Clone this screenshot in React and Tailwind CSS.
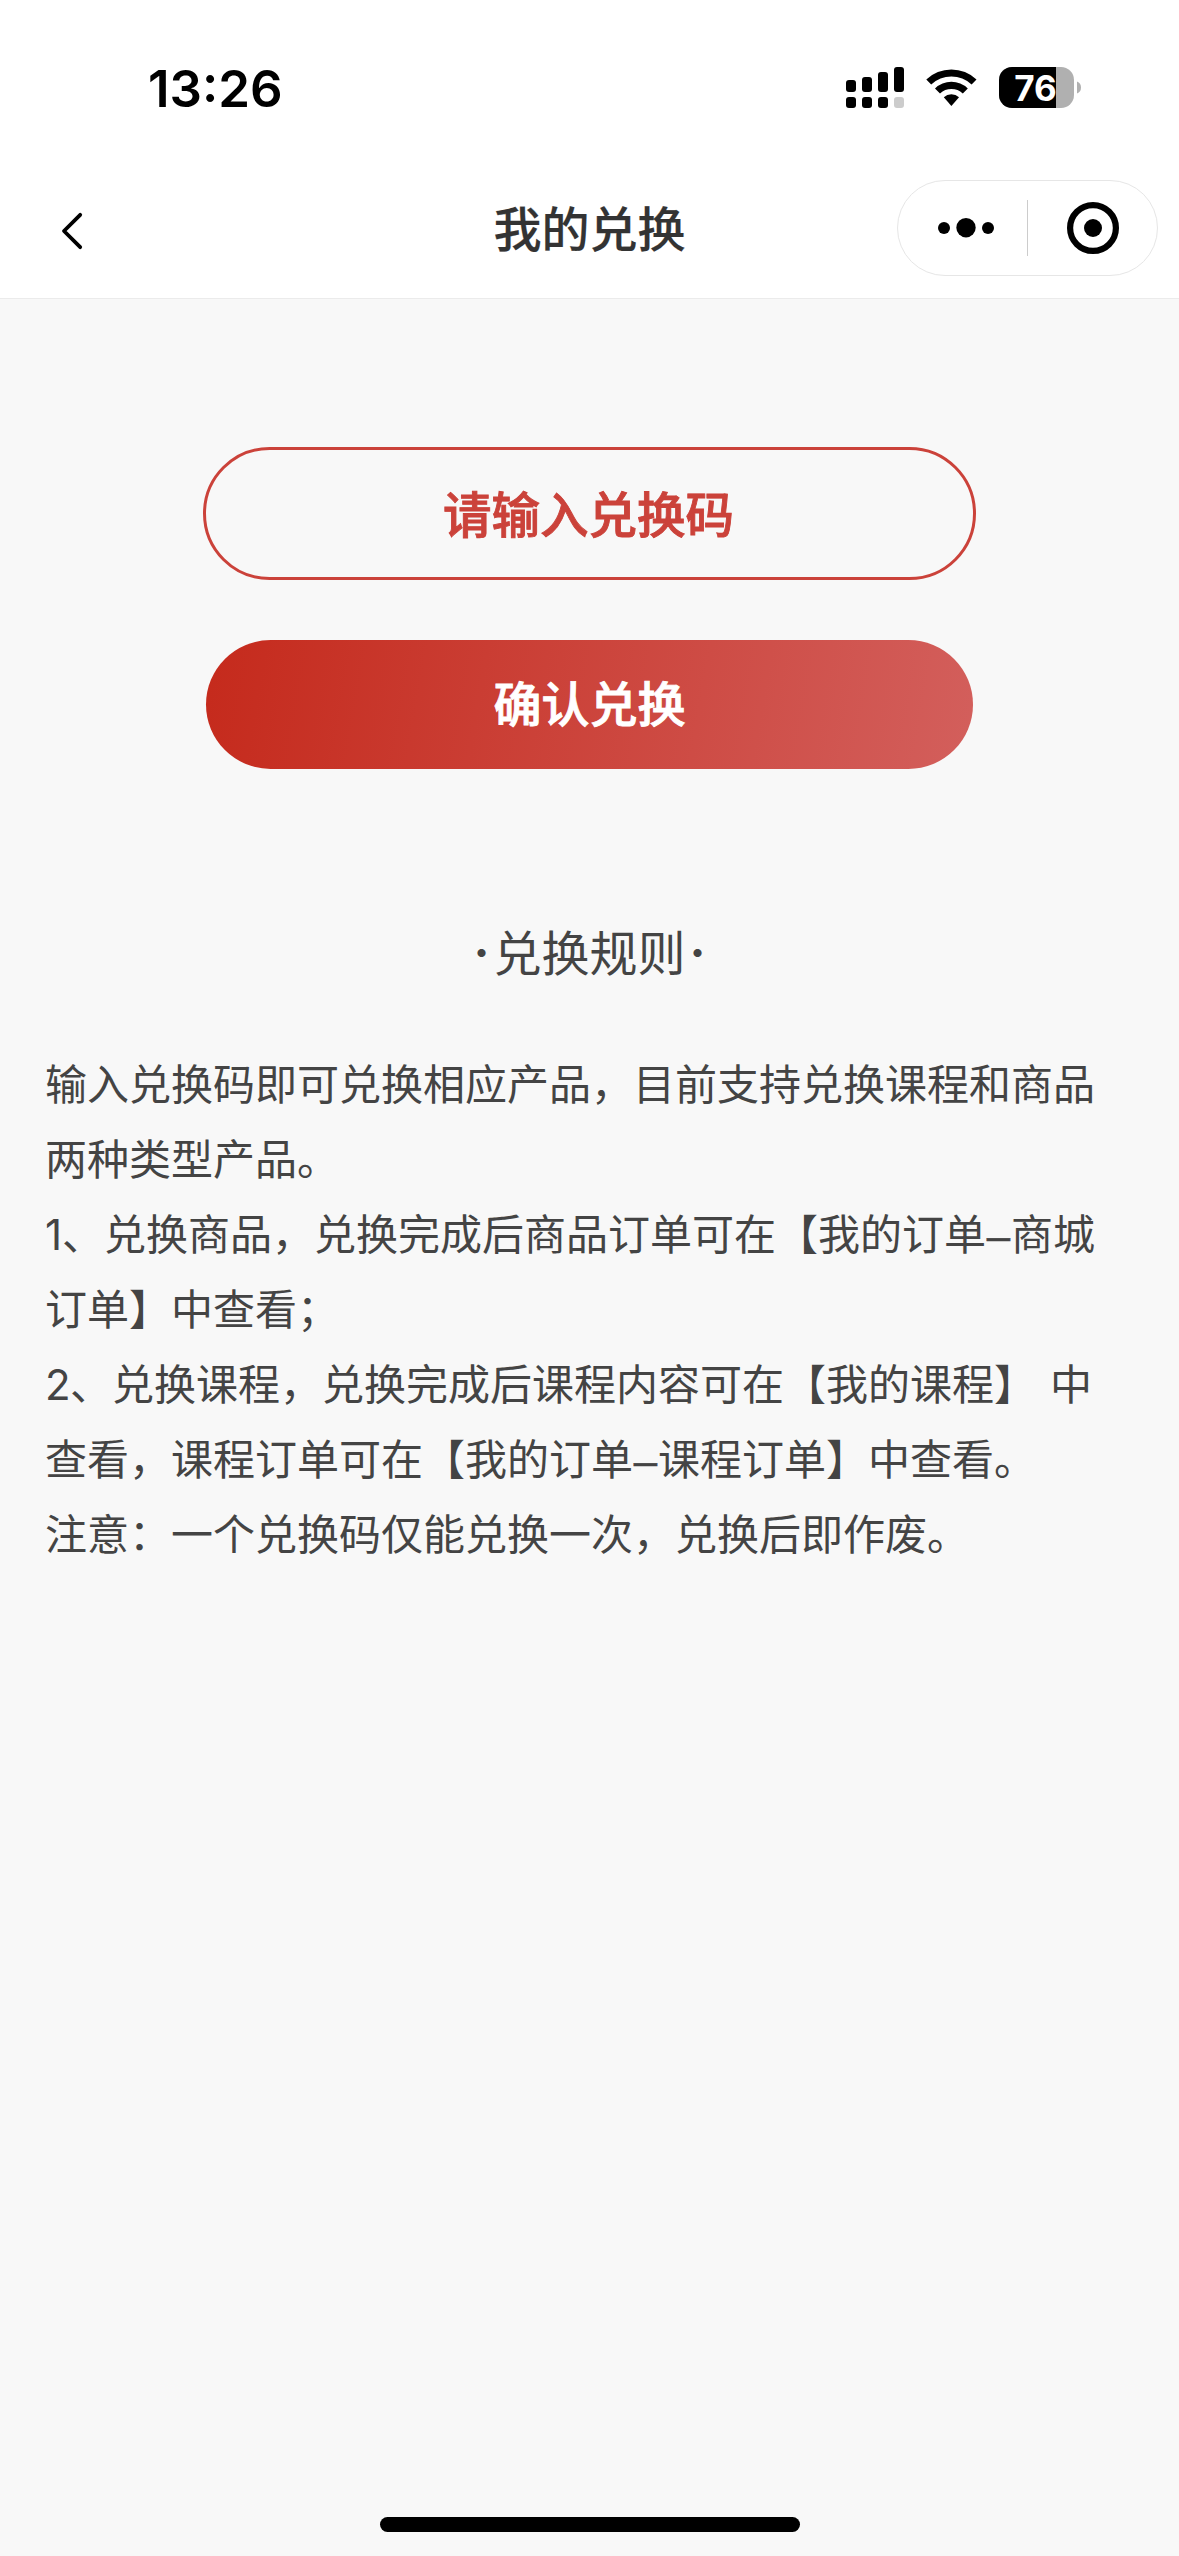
const rules = [
	["输入兑换码即可兑换相应产品，目前支持兑换课程和商品"],
	["两种类型产品。"],
	["1", "、兑换商品，兑换完成后商品订单可在【我的订单", "–", "商城"],
	["订单】中查看；"],
	["2", "、兑换课程，兑换完成后课程内容可在【我的课程】", " ", "中"],
	["查看，课程订单可在【我的订单", "–", "课程订单】中查看。"],
	["注意：一个兑换码仅能兑换一次，兑换后即作废。"],
];

const narrow = {
	1: "inline-block w-[17px] font-['Inter']",
	2: "inline-block w-[25px] font-['Inter']",
	"–": "inline-block w-[25px] text-center font-['Liberation_Sans'] [-webkit-text-stroke:0.5px]",
	" ": "inline-block w-[14px]",
};

function StatusIcons() {
	return (
		<svg className="h-[46px] w-[240px]" viewBox="844 65 240 46">
			<rect x="846" y="80" width="10" height="12" rx="3" />
			<rect x="862" y="77" width="10" height="15" rx="3" />
			<rect x="878" y="72" width="10" height="20" rx="3" />
			<rect x="894" y="67" width="10" height="25" rx="3" />
			<rect x="846" y="97" width="10" height="11" rx="3" />
			<rect x="862" y="97" width="10" height="11" rx="3" />
			<rect x="878" y="97" width="10" height="11" rx="3" />
			<rect x="894" y="97" width="10" height="11" rx="3" fill="#cccccc" />
			<path d="M926.3 79.6a36.2 36.2 0 0 1 50.2 0l-4.9 4.9a29.3 29.3 0 0 0-40.4 0z" />
			<path d="M935 88.4a23.8 23.8 0 0 1 32.8 0l-5 5a16.9 16.9 0 0 0-22.8 0z" />
			<path d="M943.8 97.2a11.4 11.4 0 0 1 15.2 0l-7.6 8.8z" />
			<clipPath id="battery">
				<rect x="999" y="67" width="75" height="41" rx="13" />
			</clipPath>
			<g clipPath="url(#battery)">
				<rect x="999" y="67" width="75" height="41" fill="#b0b0b0" />
				<rect x="999" y="67" width="57" height="41" />
			</g>
			<path d="M1077 81.5q4 1.6 4 6t-4 6z" fill="#b0b0b0" />
			<text
				x="1035.5"
				y="100.5"
				fill="#fff"
				textAnchor="middle"
				className="font-['Inter'] text-[35px] font-bold"
			>
				76
			</text>
		</svg>
	);
}

function Capsule() {
	return (
		<div className="flex h-24 w-[261px] items-center rounded-full border border-[#e6e6e6]">
			<button className="flex h-full w-[129px] items-center justify-end">
				<svg className="h-5 w-[90px]" viewBox="937 219 90 20">
					<circle cx="944" cy="229" r="6" />
					<circle cx="966" cy="228.7" r="9.7" />
					<circle cx="988" cy="229" r="6" />
				</svg>
			</button>
			<span className="h-14 w-px bg-[#cccccc]" />
			<button className="flex h-full flex-1 items-center justify-center">
				<svg className="h-[52px] w-[52px]" viewBox="0 0 52 52">
					<circle cx="26" cy="26" r="22.9" fill="none" stroke="#000" strokeWidth="6.2" />
					<circle cx="26" cy="26" r="9" />
				</svg>
			</button>
		</div>
	);
}

export default function App() {
	return (
		<div className="flex h-[2556px] w-[1179px] flex-col bg-[#f8f8f8] font-['Noto_Sans_CJK_SC',sans-serif] text-[#444444]">
			<header className="h-[299px] border-b border-[#ebebeb] bg-white text-black">
				<div className="flex h-[176px] items-center justify-between pr-[95px] pl-[148px]">
					<span className="font-['Inter'] text-[51px] leading-none font-semibold">
						13:26
					</span>
					<StatusIcons />
				</div>
				<div className="grid h-[104px] grid-cols-[1fr_auto_1fr] items-center pr-[21px] pl-[60px]">
					<button className="flex items-center pt-1.5">
						<svg className="h-10 w-6" viewBox="60 211 24 40">
							<path
								d="M80.2 214.8L64 231l16.2 16.2"
								fill="none"
								stroke="#000"
								strokeWidth="3.8"
								strokeLinecap="round"
								strokeLinejoin="round"
							/>
						</svg>
					</button>
					<h1 className="-ml-[39px] pb-1 text-5xl leading-none font-medium text-[#333333] [-webkit-text-stroke:0.2px]">
						我的兑换
					</h1>
					<div className="flex justify-end">
						<Capsule />
					</div>
				</div>
			</header>

			<main className="flex flex-1 flex-col items-center pt-[148px]">
				<div className="flex h-[133px] w-[773px] items-center justify-center rounded-full border-3 border-[#cb423a] pr-0.5 pb-0.5 text-[48.5px] leading-none font-medium text-[#cb423a] [-webkit-text-stroke:0.9px]">
					请输入兑换码
				</div>
				<button className="mt-[60px] flex h-[129px] w-[767px] items-center justify-center rounded-full bg-linear-[100deg,#c52a1c,#d35f5c] pb-2 text-5xl leading-none font-medium text-white [-webkit-text-stroke:0.9px]">
					确认兑换
				</button>

				<h2 className="mt-[157px] flex text-5xl leading-none">
					<span className="w-6 pt-[3px] text-center font-['Inter'] font-bold">·</span>
					兑换规则
					<span className="w-6 pt-[3px] text-center font-['Inter'] font-bold">·</span>
				</h2>
				<div className="mt-[67px] w-full pl-[45px] text-[42px] leading-[75px] whitespace-pre">
					{rules.map((parts, index) => (
						<p key={index} className="h-[75px]">
							{parts.map((part, i) => (
								<span key={i} className={narrow[part]}>
									{part}
								</span>
							))}
						</p>
					))}
				</div>
			</main>

			<footer className="flex justify-center pb-6">
				<span className="h-[15px] w-[420px] rounded-full bg-black" />
			</footer>
		</div>
	);
}
